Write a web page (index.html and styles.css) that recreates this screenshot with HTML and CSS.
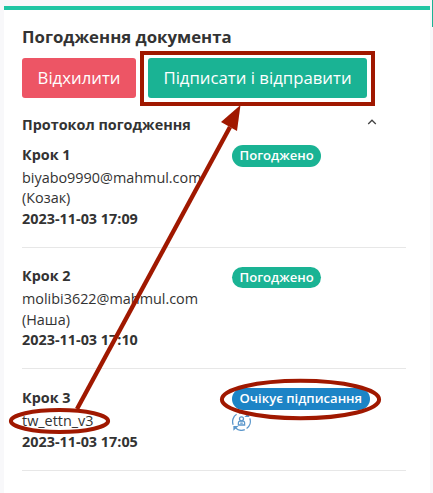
FILE: index.html
```html
<!DOCTYPE html>
<html lang="uk">
<head>
<meta charset="utf-8">
<title>Погодження документа</title>
<link rel="stylesheet" href="styles.css">
</head>
<body>
<main class="card">
  <h1 class="title">Погодження документа</h1>
  <div class="actions">
    <button class="btn btn-danger">Відхилити</button>
    <button class="btn btn-primary">Підписати і відправити</button>
  </div>
  <div class="protocol">
    <h2 class="subtitle">Протокол погодження</h2>
    <svg class="chevron" width="10" height="6" viewBox="0 0 10 6"><path d="M1.2 5 5 1.2 8.8 5" fill="none" stroke="#444" stroke-width="1.3"/></svg>
  </div>
  <section class="step">
    <div class="info"><b class="name">Крок 1</b><span>biyabo9990@mahmul.com</span><span>(Козак)</span><b>2023-11-03 17:09</b></div>
    <div class="status"><span class="badge">Погоджено</span></div>
  </section>
  <section class="step">
    <div class="info"><b class="name">Крок 2</b><span>molibi3622@mahmul.com</span><span>(Наша)</span><b>2023-11-03 17:10</b></div>
    <div class="status"><span class="badge badge-low">Погоджено</span></div>
  </section>
  <section class="step step-current">
    <div class="info"><b class="name">Крок 3</b><span>tw_ettn_v3</span><b>2023-11-03 17:05</b></div>
    <div class="status"><span class="badge badge-wait">Очікує підписання</span>
      <svg class="user-icon" width="19" height="19" viewBox="0 0 19 19" fill="none" stroke="#5b97cb" stroke-width="1.3">
        <path d="M1.2 12.8A8.7 8.7 0 0 1 4.6 2.3M7 1.1a8.7 8.7 0 0 1 7.5 1.2M17.8 6.4A8.7 8.7 0 0 1 14.6 16.5M12.8 17.6A8.7 8.7 0 0 1 3.6 16"/>
        <path d="M14 4.3h2.6V1.8ZM2 17.3V14.6H4.9Z" fill="#5b97cb"/>
        <circle cx="9.5" cy="6.8" r="2"/><path d="M6.4 13V10.8Q6.4 9.1 8.2 9.1H10.8Q12.6 9.1 12.6 10.8V13ZM8.2 11.1h2.6"/>
      </svg>
    </div>
  </section>
</main>
<div class="side-tab"></div>
<svg class="annotations" width="433" height="493" viewBox="0 0 433 493" fill="none" stroke="#a01800">
  <rect x="142" y="53" width="231" height="51" stroke-width="4"/>
  <path d="M77 409 230 127" stroke-width="4.4"/>
  <path d="M240.5 105 237 131 221 122Z" fill="#a01800" stroke="none"/>
  <ellipse cx="59.5" cy="421" rx="48.6" ry="11" stroke-width="4"/>
  <ellipse cx="300.5" cy="399.5" rx="78.6" ry="18.7" stroke-width="4"/>
</svg>
</body>
</html>
```
FILE: styles.css
```css
* { box-sizing: border-box; }
html, body { height: 100%; overflow: hidden; }
body {
  margin: 0;
  padding: 6px 3px 0 4px;
  background: #f8f8fa;
  color: #333;
  font: 14.4px/20.6px "Open Sans", "Noto Sans", sans-serif;
}
.card {
  height: 487px;
  padding: 16px 24px 0 18px;
  border-top: 4px solid #1fc5a3;
  background: #fff;
}
.title { margin: 0; font-size: 16.8px; line-height: 22px; font-weight: 700; }
.actions { display: flex; gap: 12px; margin-top: 10px; }
.btn {
  height: 40px;
  padding: 0;
  border: 0;
  border-radius: 3px;
  color: #fff;
  font: 16.75px/40px "Open Sans", "Noto Sans", sans-serif;
  white-space: nowrap;
}
.btn-danger { width: 114px; background: #ed5565; }
.btn-primary { width: 219px; background: #1ab394; }
.protocol { display: flex; justify-content: space-between; height: 47px; padding-top: 17px; }
.subtitle { margin: 0; font-size: 14.4px; line-height: 20px; font-weight: 700; }
.chevron { margin: 4px 29px 0 0; }
.step { display: grid; grid-template-columns: 210px 1fr; margin-bottom: 18.4px; padding-bottom: 17.6px; border-bottom: 1px solid #e7e7e7; }
.info { display: flex; flex-direction: column; white-space: nowrap; }
.name { margin-bottom: 2px; }
.step-current .name { margin-bottom: 2.6px; }
.status { display: flex; flex-direction: column; align-items: flex-start; }
.badge {
  height: 22px;
  padding: 0 7.5px;
  border-radius: 11px;
  background: #1ab394;
  color: #fff;
  font-size: 13.1px;
  line-height: 21px;
  font-weight: 600;
  white-space: nowrap;
}
.badge-low { height: 21px; margin-top: .7px; }
.badge-wait { background: #1c84c6; }
.user-icon { margin-top: 2px; }
.side-tab { position: absolute; top: 0; right: 0; width: 1px; height: 27px; background: #1ab394; }
.annotations { position: absolute; inset: 0; pointer-events: none; }
```
